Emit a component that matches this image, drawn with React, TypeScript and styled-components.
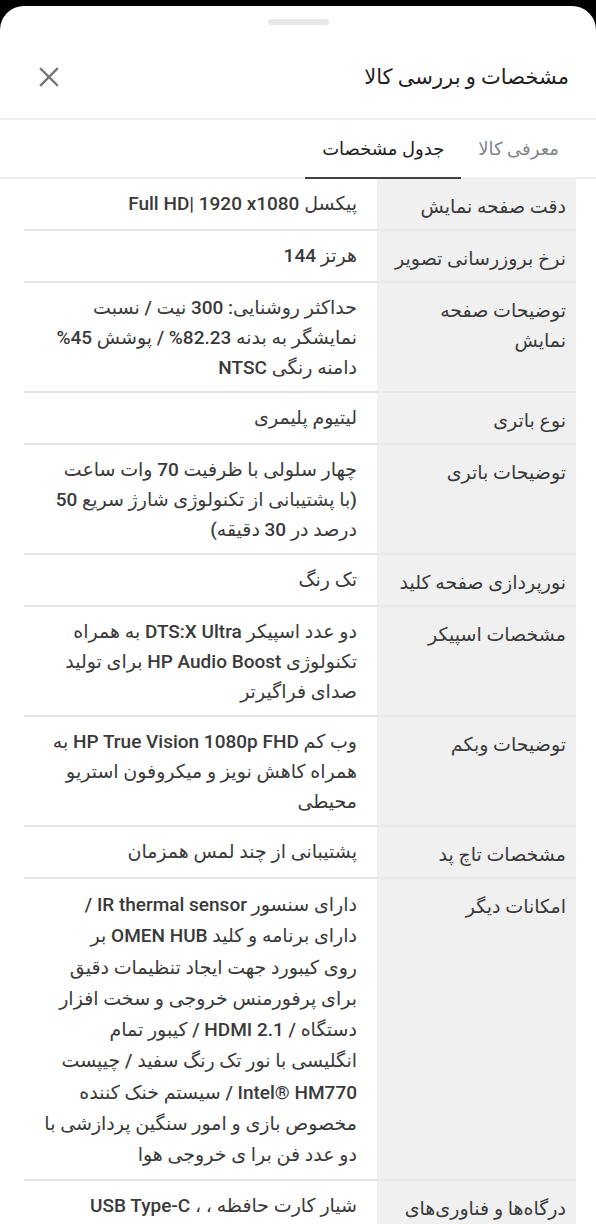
import React from 'react'
import styled, {createGlobalStyle} from 'styled-components'

const GlobalStyle = createGlobalStyle`
  html, body {
    margin: 0;
    padding: 0;
    background: #000;
  }
  body {
    font-family: Roboto, "DejaVu Sans", sans-serif;
    overflow: hidden;
  }
`

type Spec = {
  label: string
  value: React.ReactNode
  lh?: number
}

const specs: Spec[] = [
  {label: 'دقت صفحه نمایش', value: <>پیکسل <Ltr>Full HD| 1920 x1080</Ltr></>},
  {label: 'نرخ بروزرسانی تصویر', value: 'هرتز 144'},
  {
    label: 'توضیحات صفحه\nنمایش',
    value: 'حداکثر روشنایی: 300 نیت / نسبت\nنمایشگر به بدنه 82.23% / پوشش 45%\nدامنه رنگی NTSC',
  },
  {label: 'نوع باتری', value: 'لیتیوم پلیمری'},
  {
    label: 'توضیحات باتری',
    value: 'چهار سلولی با ظرفیت 70 وات ساعت\n(با پشتیبانی از تکنولوژی شارژ سریع 50\nدرصد در 30 دقیقه)',
  },
  {label: 'نورپردازی صفحه کلید', value: 'تک رنگ'},
  {
    label: 'مشخصات اسپیکر',
    value: 'دو عدد اسپیکر DTS:X Ultra به همراه\nتکنولوژی HP Audio Boost برای تولید\nصدای فراگیرتر',
  },
  {
    label: 'توضیحات وبکم',
    value: 'وب کم HP True Vision 1080p FHD به\nهمراه کاهش نویز و میکروفون استریو\nمحیطی',
  },
  {label: 'مشخصات تاچ پد', value: 'پشتیبانی از چند لمس همزمان'},
  {
    label: 'امکانات دیگر',
    value:
      'دارای سنسور IR thermal sensor /\nدارای برنامه و کلید OMEN HUB بر\nروی کیبورد جهت ایجاد تنظیمات دقیق\nبرای پرفورمنس خروجی و سخت افزار\nدستگاه / HDMI 2.1 / کیبور تمام\nانگلیسی با نور تک رنگ سفید / چیپست\nIntel® HM770 / سیستم خنک کننده\nمخصوص بازی و امور سنگین پردازشی با\nدو عدد فن برا ی خروجی هوا',
    lh: 31.3,
  },
  {
    label: 'درگاه\u200cها و فناوری\u200cهای',
    value: 'شیار کارت حافظه ، ، USB Type-C',
  },
]

const App: React.FC = () => {
  return (
    <>
      <GlobalStyle />
      <Sheet>
        <Grabber />
        <Header>
          <Title>مشخصات و بررسی کالا</Title>
          <CloseButton aria-label="بستن">
            <svg width="20" height="20" viewBox="0 0 20 20">
              <path d="M2 2L18 18M18 2L2 18" stroke="#757575" strokeWidth="2.4" strokeLinecap="square" />
            </svg>
          </CloseButton>
        </Header>
        <Tabs>
          <Tab>معرفی کالا</Tab>
          <Tab $active>جدول مشخصات</Tab>
        </Tabs>
        <SpecTable>
          {specs.map((s, i) => (
            <SpecRow key={i}>
              <LabelCell>{s.label}</LabelCell>
              <ValueCell $lh={s.lh ?? 30}>{s.value}</ValueCell>
            </SpecRow>
          ))}
        </SpecTable>
      </Sheet>
    </>
  )
}

function Ltr({children}: {children: React.ReactNode}) {
  return <LtrSpan dir="ltr">{children}</LtrSpan>
}

const LtrSpan = styled.span`
  direction: ltr;
  unicode-bidi: isolate;
`

const Sheet = styled.div`
  direction: rtl;
  margin-top: 6px;
  height: 1218px;
  overflow: hidden;
  background: #fff;
  border-radius: 24px 24px 0 0;
  display: flex;
  flex-direction: column;
`

const Grabber = styled.div`
  align-self: center;
  flex: none;
  width: 61px;
  height: 6px;
  margin-top: 13px;
  border-radius: 3px;
  background: #e8e8e8;
`

const Header = styled.div`
  display: flex;
  flex: none;
  align-items: center;
  justify-content: space-between;
  box-sizing: border-box;
  height: 95px;
  padding: 10px 27px 0 39px;
  border-bottom: 2px solid #eeeeee;
`

const Title = styled.h1`
  margin: 0;
  font-size: 21px;
  font-weight: 500;
  color: #212121;
`

const CloseButton = styled.button`
  display: flex;
  padding: 0;
  border: 0;
  background: none;
  cursor: pointer;
`

const Tabs = styled.div`
  display: flex;
  flex: none;
  align-items: stretch;
  height: 59px;
  box-sizing: border-box;
  padding-right: 20px;
  border-bottom: 2px solid #eeeeee;
`

const Tab = styled.div<{$active?: boolean}>`
  display: flex;
  align-items: center;
  padding: 0 17px;
  margin-bottom: -2px;
  font-size: 18px;
  font-weight: 500;
  color: ${(p) => (p.$active ? '#212121' : '#81858b')};
  border-bottom: 2px solid ${(p) => (p.$active ? '#424242' : 'transparent')};
`

const SpecTable = styled.div`
  padding: 0 20px 0 24px;
`

const SpecRow = styled.div`
  display: grid;
  grid-template-columns: 199px 1fr;
`

const LabelCell = styled.div`
  padding: 13px 10px 7px 6px;
  background: #f0f0f0;
  border-bottom: 2px solid #e8e8e8;
  font-size: 19px;
  line-height: 30px;
  color: #3a3a3a;
  white-space: pre-line;
`

const ValueCell = styled.div<{$lh: number}>`
  padding: 10px 20px 8px 8px;
  border-bottom: 2px solid #e3e3e3;
  font-size: 19px;
  font-weight: 500;
  line-height: ${(p) => p.$lh}px;
  color: #3a3a3a;
  white-space: pre-line;
`

export default App
